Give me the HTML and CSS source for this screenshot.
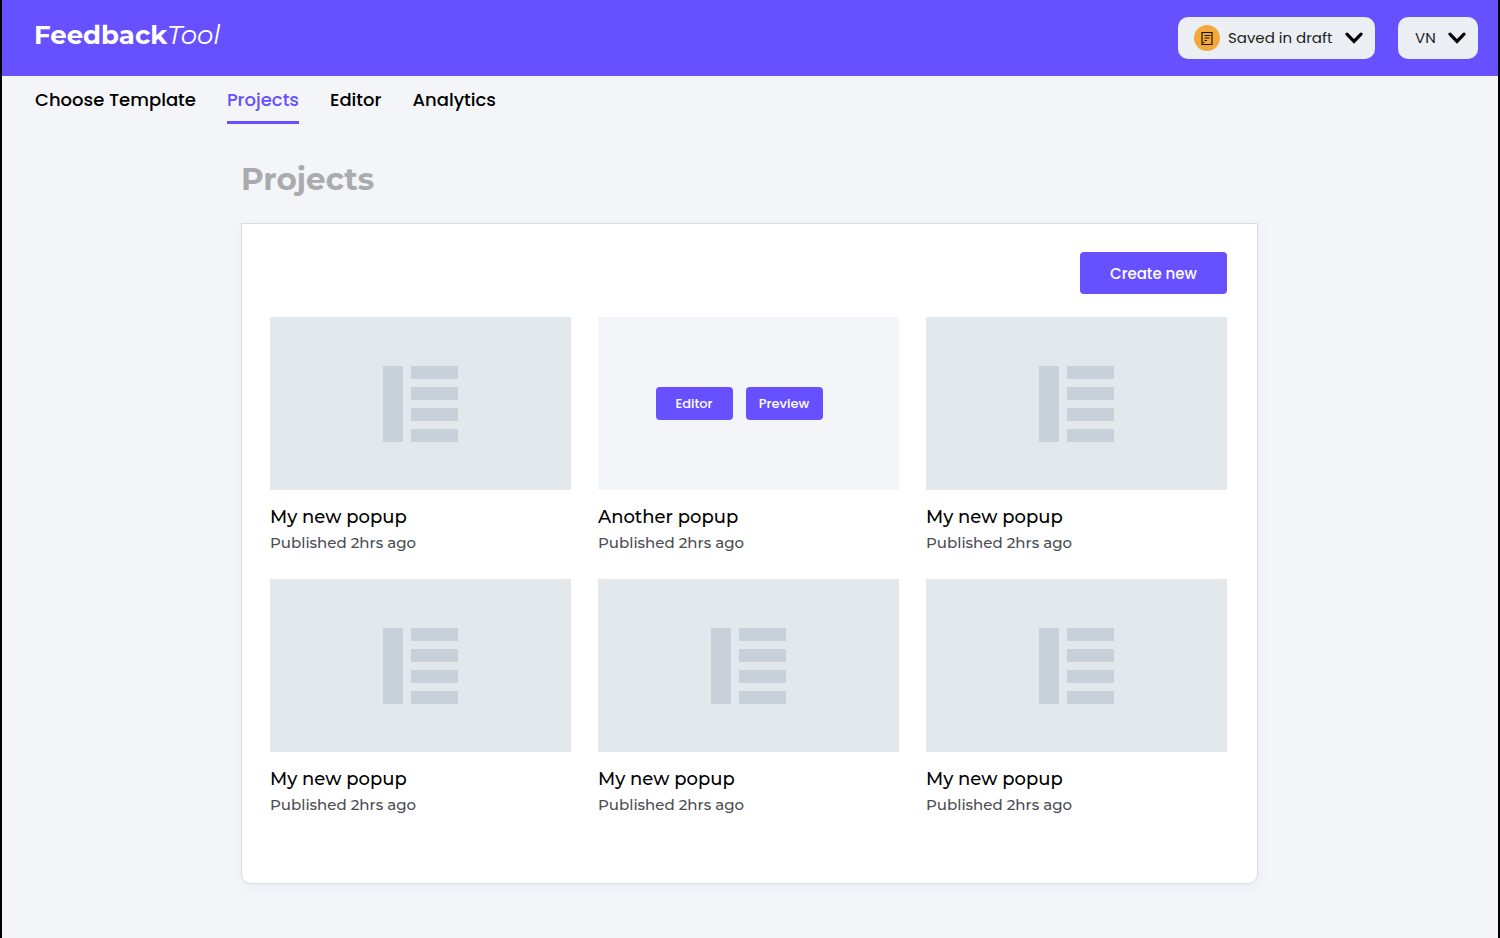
FILE: index.html
```html
<!DOCTYPE html>
<html lang="en">
<head>
<meta charset="utf-8">
<meta name="viewport" content="width=device-width, initial-scale=1">
<title>FeedbackTool – Projects</title>
<link rel="stylesheet" href="styles.css">
</head>
<body>
<svg class="sprite" aria-hidden="true">
  <symbol id="chevron" viewBox="0 0 18 12"><path d="M2 2.2 9 9.4l7-7.2" fill="none" stroke="#000" stroke-width="3.2" stroke-linecap="round" stroke-linejoin="miter"/></symbol>
  <symbol id="layout" viewBox="0 0 75 76"><path d="M0 0h20v76H0zM28 0h47v13H28zM28 21h47v13H28zM28 42h47v13H28zM28 63h47v13H28z" fill="#c8d1da"/></symbol>
</svg>

<header class="topbar">
  <a class="logo" href="#"><strong class="logo-strong">Feedback</strong><em class="logo-light">Tool</em></a>
  <div class="topbar-actions">
    <label class="picker">
      <svg class="draft-icon" viewBox="0 0 26 26" aria-hidden="true">
        <circle cx="13" cy="13" r="13" fill="#f2a93b"/>
        <path d="M8 7.500h10v12H8zM10.500 10.500h6M10.500 13h5M10.500 15.500h2.500M9 17.500h1.500" fill="none" stroke="#1b1408" stroke-width="1.200"/>
      </svg>
      <select class="picker-select" aria-label="Save status"><option>Saved in draft</option></select>
      <svg class="chevron" aria-hidden="true"><use href="#chevron"/></svg>
    </label>
    <label class="picker">
      <select class="picker-select" aria-label="Account"><option>VN</option></select>
      <svg class="chevron" aria-hidden="true"><use href="#chevron"/></svg>
    </label>
  </div>
</header>

<nav class="tabs" aria-label="Main">
  <a class="tab" href="#">Choose Template</a>
  <a class="tab tab-active" href="#" aria-current="page">Projects</a>
  <a class="tab" href="#">Editor</a>
  <a class="tab" href="#">Analytics</a>
</nav>

<main class="content">
  <h1 class="page-title">Projects</h1>
  <section class="panel" aria-label="Projects">
    <div class="panel-actions"><button class="button button-large" type="button">Create new</button></div>
    <div class="projects">
      <article class="project">
        <div class="thumb"><svg class="thumb-icon" aria-hidden="true"><use href="#layout"/></svg></div>
        <h2 class="project-name">My new popup</h2>
        <p class="project-meta">Published 2hrs ago</p>
      </article>
      <article class="project">
        <div class="thumb thumb-hover">
          <button class="button button-small" type="button">Editor</button>
          <button class="button button-small" type="button">Preview</button>
        </div>
        <h2 class="project-name">Another popup</h2>
        <p class="project-meta">Published 2hrs ago</p>
      </article>
      <article class="project">
        <div class="thumb"><svg class="thumb-icon" aria-hidden="true"><use href="#layout"/></svg></div>
        <h2 class="project-name">My new popup</h2>
        <p class="project-meta">Published 2hrs ago</p>
      </article>
      <article class="project">
        <div class="thumb"><svg class="thumb-icon" aria-hidden="true"><use href="#layout"/></svg></div>
        <h2 class="project-name">My new popup</h2>
        <p class="project-meta">Published 2hrs ago</p>
      </article>
      <article class="project">
        <div class="thumb"><svg class="thumb-icon" aria-hidden="true"><use href="#layout"/></svg></div>
        <h2 class="project-name">My new popup</h2>
        <p class="project-meta">Published 2hrs ago</p>
      </article>
      <article class="project">
        <div class="thumb"><svg class="thumb-icon" aria-hidden="true"><use href="#layout"/></svg></div>
        <h2 class="project-name">My new popup</h2>
        <p class="project-meta">Published 2hrs ago</p>
      </article>
    </div>
  </section>
</main>
</body>
</html>
```
FILE: styles.css
```css
* { box-sizing: border-box; }

body {
  margin: 0;
  min-height: 100vh;
  border: solid #000;
  border-width: 0 2px;
  background: #f3f5f9;
  color: #000;
  font-family: Montserrat, Inter, "Open Sans", sans-serif;
}

.sprite { position: absolute; width: 0; height: 0; }

.topbar {
  display: flex;
  align-items: center;
  justify-content: space-between;
  height: 76px;
  padding: 0 20px 1px 32px;
  background: #6750ff;
}

.logo {
  padding-bottom: 6px;
  color: #fff;
  font-size: 26px;
  line-height: 32px;
  text-decoration: none;
}
.logo-strong { font-weight: 700; }
.logo-light { font-weight: 400; }

.topbar-actions { display: flex; gap: 23px; }

.picker {
  display: flex;
  align-items: center;
  justify-content: flex-end;
  min-width: 80px;
  height: 42px;
  padding: 0 12px 0 16px;
  border-radius: 10px;
  background: #ebeef3;
}
.draft-icon { width: 26px; height: 26px; margin-right: 8px; }
.picker-select {
  appearance: none;
  margin: 0 12px 0 0;
  padding: 0;
  border: 0;
  background: none;
  color: #1c1d20;
  font-family: Poppins, Montserrat, Inter, sans-serif;
  font-size: 15px;
  line-height: 24px;
}
.chevron { width: 18px; height: 12px; }

.tabs {
  display: flex;
  gap: 31px;
  padding: 10px 33px 0;
}
.tab {
  padding-bottom: 7px;
  border-bottom: 3px solid transparent;
  color: #000;
  font-family: Poppins, Montserrat, Inter, sans-serif;
  font-size: 18px;
  font-weight: 500;
  line-height: 28px;
  text-decoration: none;
}
.tab-active { border-color: #6750ff; color: #6750ff; }

.content {
  max-width: 1058px;
  margin: 0 auto;
  padding: 35px 21px 54px 20px;
}
.page-title {
  margin: 0 0 24px;
  color: #aaabad;
  font-size: 31px;
  font-weight: 700;
  line-height: 40px;
}
.panel {
  padding: 28px 30px 66px 28px;
  border: 1px solid #d5dce2;
  border-radius: 0 0 10px 10px;
  background: #fff;
  box-shadow: 0 4px 8px #dfe6ee80;
}
.panel-actions {
  display: flex;
  justify-content: flex-end;
  margin-bottom: 23px;
}
.button {
  border: 0;
  border-radius: 4px;
  background: #6750ff;
  color: #fff;
  font-family: Poppins, Montserrat, Inter, sans-serif;
  font-weight: 500;
}
.button-large { min-width: 147px; height: 42px; font-size: 15px; }
.button-small { min-width: 77px; height: 33px; padding: 0 8px; font-size: 13px; }

.projects {
  display: grid;
  grid-template-columns: repeat(3, 1fr);
  gap: 24px 27px;
}
.thumb {
  display: flex;
  align-items: center;
  justify-content: center;
  gap: 13px;
  height: 173px;
  background: #e3e8ec;
}
.thumb-hover { padding-right: 19px; background: #f3f5f9; }
.thumb-icon { width: 75px; height: 76px; }
.project-name {
  margin: 14px 0 0;
  font-size: 18px;
  font-weight: 500;
  line-height: 26px;
}
.project-meta {
  margin: 0;
  color: #4b4d52;
  font-size: 15px;
  font-weight: 500;
  line-height: 25px;
}
```
